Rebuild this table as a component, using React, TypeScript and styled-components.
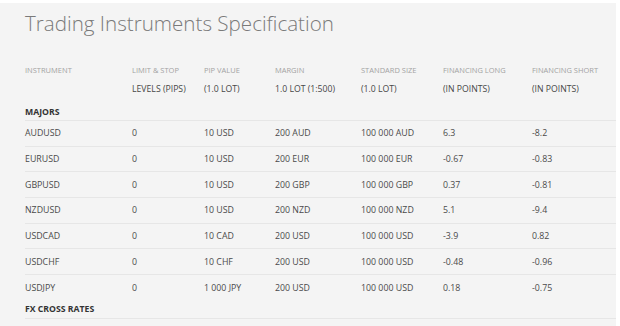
import React from "react";
import styled, { createGlobalStyle } from "styled-components";

const Global = createGlobalStyle`
  html, body { margin: 0; padding: 0; background: #ffffff; overflow: hidden; }
  body { font-family: "Open Sans", "Noto Sans", sans-serif; }
`;

const Panel = styled.div`
  margin: 3px 4px 0 0;
  height: 323px;
  background: #f4f4f4;
  overflow: hidden;
  box-sizing: border-box;
  padding: 5px 0 0 25px;
`;

const Title = styled.h1`
  margin: 0;
  font-family: "Open Sans", sans-serif;
  font-weight: 300;
  font-size: 20.6px;
  line-height: 30px;
  color: #7a7a7a;
`;

const COLS = "107px 72px 71px 86px 82px 89px 1fr";

const HeadRow = styled.div<{ $top: number; $muted?: boolean }>`
  display: grid;
  grid-template-columns: ${COLS};
  margin-top: ${(p) => p.$top}px;
  height: 12px;
  align-items: center;
  font-size: ${(p) => (p.$muted ? "7.5px" : "8.7px")};
  color: ${(p) => (p.$muted ? "#a3a3a3" : "#474747")};
  text-transform: uppercase;
  white-space: nowrap;
`;

const SectionRow = styled.div<{ $top?: number }>`
  margin-top: ${(p) => p.$top ?? 0}px;
  height: 17px;
  display: flex;
  align-items: center;
  font-size: 8.7px;
  font-weight: 700;
  color: #333333;
  border-bottom: 1px solid #e6e6e6;
  box-sizing: content-box;
`;

const DataRow = styled.div<{ $last?: boolean }>`
  display: grid;
  grid-template-columns: ${COLS};
  height: 25.7px;
  align-items: center;
  font-size: 8.8px;
  color: #4a4a4a;
  border-bottom: ${(p) => (p.$last ? "none" : "1px solid #e6e6e6")};
  box-sizing: border-box;
  white-space: nowrap;
`;

const Cell = styled.div``;

const head1 = [
  "Instrument",
  "Limit & Stop",
  "Pip Value",
  "Margin",
  "Standard Size",
  "Financing Long",
  "Financing Short",
];
const head2 = ["", "Levels (pips)", "(1.0 lot)", "1.0 lot (1:500)", "(1.0 lot)", "(in points)", "(in points)"];

const majors = [
  ["AUDUSD", "0", "10 USD", "200 AUD", "100 000 AUD", "6.3", "-8.2"],
  ["EURUSD", "0", "10 USD", "200 EUR", "100 000 EUR", "-0.67", "-0.83"],
  ["GBPUSD", "0", "10 USD", "200 GBP", "100 000 GBP", "0.37", "-0.81"],
  ["NZDUSD", "0", "10 USD", "200 NZD", "100 000 NZD", "5.1", "-9.4"],
  ["USDCAD", "0", "10 CAD", "200 USD", "100 000 USD", "-3.9", "0.82"],
  ["USDCHF", "0", "10 CHF", "200 USD", "100 000 USD", "-0.48", "-0.96"],
  ["USDJPY", "0", "1 000 JPY", "200 USD", "100 000 USD", "0.18", "-0.75"],
];

export default function App() {
  return (
    <>
      <Global />
      <Panel>
        <Title>Trading Instruments Specification</Title>
        <HeadRow $top={26} $muted>
          {head1.map((h) => (
            <Cell key={h}>{h}</Cell>
          ))}
        </HeadRow>
        <HeadRow $top={7}>
          {head2.map((h, i) => (
            <Cell key={i}>{h}</Cell>
          ))}
        </HeadRow>
        <SectionRow $top={8}>MAJORS</SectionRow>
        {majors.map((r, i) => (
          <DataRow key={r[0]} $last={i === majors.length - 1}>
            {r.map((c, j) => (
              <Cell key={j}>{c}</Cell>
            ))}
          </DataRow>
        ))}
        <SectionRow>FX CROSS RATES</SectionRow>
      </Panel>
    </>
  );
}
